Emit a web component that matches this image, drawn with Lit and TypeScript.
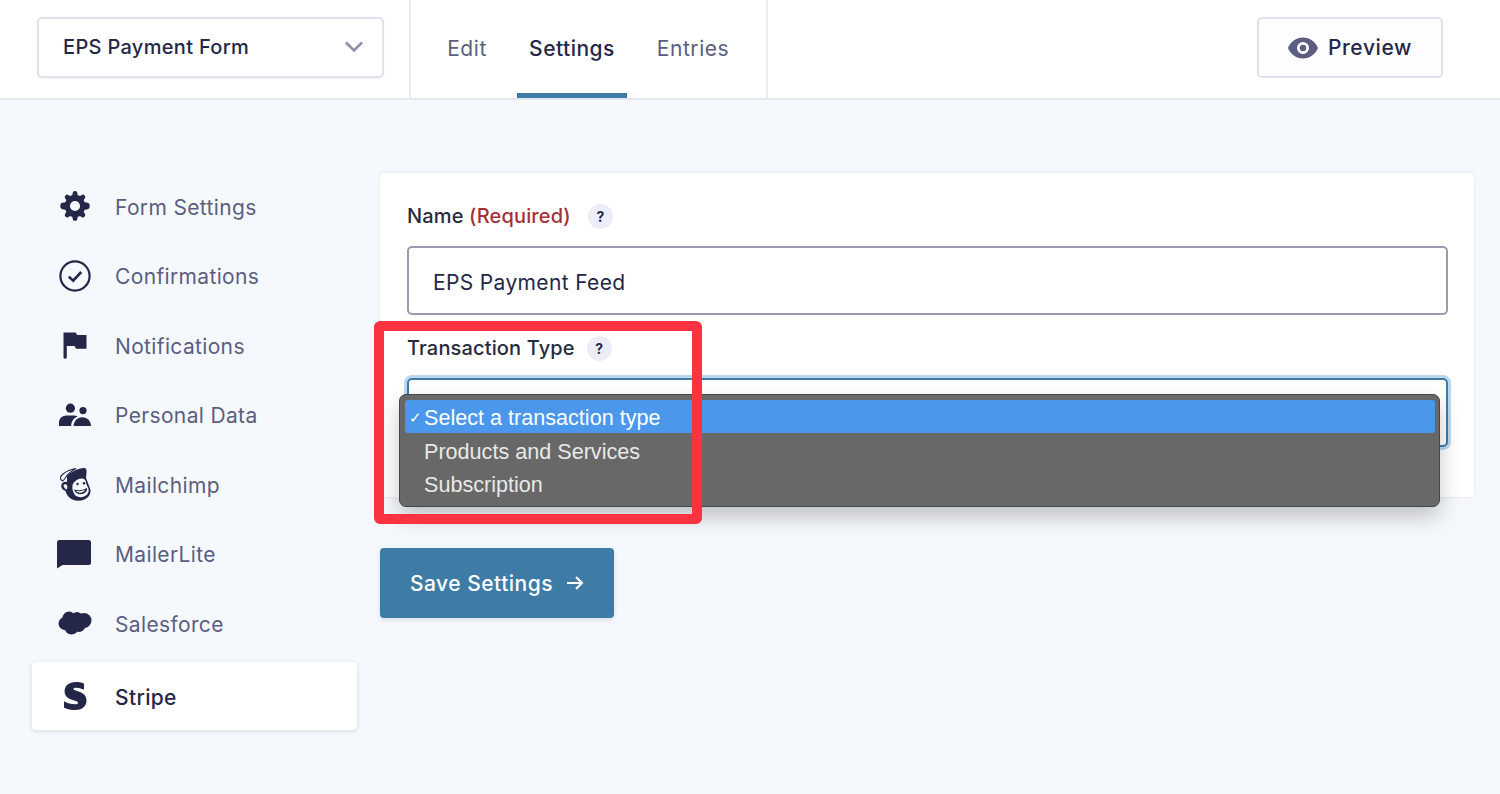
import { LitElement, html, css, svg } from "lit";
import { customElement } from "lit/decorators.js";

const NAVY = "#242748";
const BG = "#f5f8fc";

const icons: Record<string, unknown> = {
  gear: svg`<svg class="ic" width="30" height="30" viewBox="0 0 32 32"><path fill="${NAVY}" fill-rule="evenodd" d="M13.4 2.6a2.6 2.6 0 0 1 5.2 0l.2 1.7 2.6 1.1 1.4-1a2.6 2.6 0 0 1 3.5 3.8l-1.1 1.3 1.1 2.6 1.7.2a2.8 2.8 0 0 1 0 7.4l-1.7.2-1.1 2.6 1.1 1.3a2.6 2.6 0 0 1-3.5 3.8l-1.4-1-2.6 1.1-.2 1.7a2.6 2.6 0 0 1-5.2 0l-.2-1.7-2.6-1.1-1.4 1a2.6 2.6 0 0 1-3.5-3.8l1.1-1.3-1.1-2.6-1.7-.2a2.8 2.8 0 0 1 0-7.4l1.7-.2 1.1-2.6-1.1-1.3a2.6 2.6 0 0 1 3.5-3.8l1.4 1 2.6-1.1zM16 10.6a5.4 5.4 0 1 0 0 10.8 5.4 5.4 0 0 0 0-10.8z"/></svg>`,
  check: svg`<svg class="ic" width="32" height="32" viewBox="0 0 32 32" fill="none" stroke="${NAVY}"><circle cx="16" cy="16" r="14.6" stroke-width="2.2"/><path d="M9.8 16.6l4.4 4 8-8.6" stroke-width="2.6"/></svg>`,
  flag: svg`<svg class="ic" width="32" height="32" viewBox="0 0 32 32"><path fill="${NAVY}" d="M4.5 3.5h12.2l1.4 2.6h9.4v13.6H17l-1.4-2.8H7.8v11.3a1.65 1.65 0 0 1-3.3 0z"/></svg>`,
  people: svg`<svg class="ic" width="32" height="32" viewBox="0 0 32 32"><g fill="${NAVY}"><circle cx="11.4" cy="9.2" r="4.6"/><circle cx="24" cy="11.6" r="3.6"/><path d="M0 27v-3.4c0-4.200 3.400-7.200 7.300-7.200h7.600c1.400 0 2.600.4 3.600 1-3.700 1.600-6.200 4.800-6.400 9.600z"/><path d="M14.600 27c0-4.800 3.600-8.800 8.700-8.800S32 22.200 32 27z"/></g></svg>`,
  chimp: svg`<svg class="ic" width="32" height="34" viewBox="0 0 32 34">
    <path fill="${NAVY}" d="M8 9C12 5 19 1 25 1c2.500 0 2.800 2.500 2.500 5l-.5 5 2 5 2.500 7c.5 4-2 7.500-6 9.500-5 2-11 1.500-14.500-1.500C8 28.500 7 26 6.500 24 3 23 1.500 20 2.500 17.500 3.500 15 6 14.500 8 15z"/>
    <path fill="${BG}" stroke="${NAVY}" stroke-width="1.100" d="M3.500 14C.5 12 1 9.500 4 7c4-3 9-5 13-5.500-3.500 2-8 5-10 8.500-1.500 2-2.200 3.500-3.500 4z"/>
    <path fill="${BG}" d="M4.800 17.800c1.300-1 2.800-.5 3.300.8.500 1.500.3 3-.4 3.800-1.500-.2-3.900-3-2.900-4.600z"/>
    <path fill="${BG}" d="M13.500 18c1.500-3.500 5-6.500 9-6.500 3 0 4.500 2 4.500 4.500l2.500 6c.8 3-1 6-4 7.300-3.500 1.500-7.500 1-9.500-1.300-1.800-2.500-3.200-6-2.500-10z"/>
    <path fill="${NAVY}" d="M15 22.500c3.500 1.300 8.500 1 13-1.500.5 3-1.500 5.300-5 6.100-3.800.7-7-1.300-8-4.600z"/>
    <path fill="${BG}" d="M17 23.800c3 .7 6 .3 9-1-.8 1.800-2.800 2.900-5 3-1.800 0-3.200-.7-4-2z"/>
    <circle cx="18.500" cy="17" r="1.200" fill="${NAVY}"/><circle cx="25" cy="16.300" r="1.200" fill="${NAVY}"/>
  </svg>`,
  bubble: svg`<svg class="ic bub" width="36" height="30" viewBox="0 0 36 30"><path fill="${NAVY}" d="M3.500 1h29A2.500 2.500 0 0 1 35 3.500v20a2.500 2.500 0 0 1-2.500 2.500H6.500L1 29.500V3.500A2.500 2.500 0 0 1 3.500 1z"/></svg>`,
  cloud: svg`<svg class="ic" width="34" height="24" viewBox="0 0 34 24"><g fill="${NAVY}"><circle cx="11" cy="7" r="6.500"/><circle cx="19" cy="6.500" r="5.500"/><circle cx="26" cy="9.500" r="7.500"/><circle cx="7" cy="12.500" r="6.500"/><circle cx="13.500" cy="16.500" r="7"/><circle cx="21" cy="14.500" r="6.500"/></g></svg>`,
  s: svg`<svg class="ic" width="24" height="30" viewBox="0 0 24 30"><path fill="${NAVY}" d="M21 2.400v6.300c-2.600-1.300-5.400-2-8-2-1.600 0-2.500.4-2.500 1.300 0 2.700 13 1.400 13 11.500C23.500 25.700 18.800 29 12 29c-3.700 0-7.600-.8-11-2.300v-6.500c3 1.700 7.200 3 11 3 1.800 0 3-.5 3-1.500C15 18.800 1.600 20.100 1.600 10.300 1.600 4.500 6 1 12.800 1c2.900 0 5.600.4 8.200 1.400z"/></svg>`,
};

const nav = [
  ["Form Settings", "gear"],
  ["Confirmations", "check"],
  ["Notifications", "flag"],
  ["Personal Data", "people"],
  ["Mailchimp", "chimp"],
  ["MailerLite", "bubble"],
  ["Salesforce", "cloud"],
];

@customElement("app-root")
export class AppRoot extends LitElement {
  static styles = css`
    :host { display: block; width: 1500px; height: 794px; overflow: hidden; background: #f5f8fc; font-family: Inter, "Noto Sans", sans-serif; color: #242748; }
    * { box-sizing: border-box; }
    .top { height: 100px; background: #fff; border-bottom: 2px solid #e3e6ef; display: flex; align-items: stretch; }
    .formsel { margin: 17px 25px 0 37px; width: 347px; height: 61px; border: 2px solid #dfe2ec; border-radius: 5px; display: flex; align-items: center; justify-content: space-between; padding: 0 18px 2px 24px; font-size: 20px; font-weight: 500; letter-spacing: .32px; box-shadow: 0 1px 2px rgba(36,39,72,.05); }
    .tabs { display: flex; width: 359px; border-left: 2px solid #eaecf2; border-right: 2px solid #eaecf2; }
    .tab { font-size: 21px; color: #5b5e80; font-weight: 400; letter-spacing: .55px; padding-top: 36px; height: 98px; text-align: center; line-height: 26px; }
    .tab.e { width: 106px; padding-left: 6px; }
    .tab.on { width: 110px; color: #242748; font-weight: 500; letter-spacing: .5px; border-bottom: 5px solid #3e7ca6; }
    .tab.n { width: 130px; padding-left: 2px; }
    .spacer { flex: 1; }
    .preview { margin: 17px 57px 0 0; width: 186px; height: 61px; border: 2px solid #dfe2ec; border-radius: 5px; background: #fdfdff; display: flex; align-items: center; justify-content: center; gap: 10px; font-size: 21px; font-weight: 500; letter-spacing: .6px; }
    .body { display: flex; padding-top: 73px; align-items: flex-start; }
    .side { width: 325px; margin-left: 32px; margin-right: 23px; display: flex; flex-direction: column; }
    .item { height: 69.5px; display: flex; align-items: center; font-size: 21px; letter-spacing: .35px; color: #5b5e80; }
    .item span { padding-top: 2px; }
    .side .first { margin-top: -2px; height: 70px; }
    .icw { width: 83px; display: flex; justify-content: center; padding-left: 2px; flex: none; }
    .ic { display: block; }
    .ic.bub { margin-left: -2px; }
    .item.on { height: 68px; margin-top: 3.5px; background: #fff; border-radius: 4px; color: #242748; font-weight: 500; box-shadow: 0 1px 4px rgba(36,39,72,.16); }
    .item.on span { padding-top: 4px; }
    .main { width: 1094px; }
    .card { height: 324px; background: #fff; border-radius: 3px; box-shadow: 0 0 3px rgba(36,39,72,.12); padding: 30px 26px 0 27px; }
    .label { display: flex; align-items: center; height: 26px; font-size: 20px; font-weight: 450; letter-spacing: .15px; color: #272a3d; }
    .req { color: #a5303a; margin-right: 5px; }
    .q { width: 25px; height: 25px; border-radius: 50%; background: #ecedf9; margin-left: 12px; font-size: 14px; font-weight: 700; display: flex; align-items: center; justify-content: center; color: #242748; }
    .input { margin-top: 17px; height: 69px; border: 2px solid #9a9bb0; border-radius: 5px; padding: 3px 0 0 24px; display: flex; align-items: center; font-size: 21px; font-weight: 400; letter-spacing: .35px; }
    .label.t { margin-top: 20px; }
    .selw { position: relative; margin-top: 17px; height: 69px; }
    .sel { height: 69px; border: 2px solid #3e7ca6; border-radius: 5px; box-shadow: 0 0 0 3px #b9d8f0; background: #fff; }
    .pop { position: absolute; left: -8px; top: 15.5px; width: 1041px; height: 113px; background: #676867; border: 1px solid #45464a; border-radius: 7px; padding: 5px 4px 5px 5px; box-shadow: 0 10px 22px rgba(0,0,0,.22); font-family: "Liberation Sans", Arial, sans-serif; font-size: 21.6px; color: #e8e8e8; z-index: 2; }
    .opt { height: 33.7px; display: flex; align-items: center; padding: 3px 0 0 19px; position: relative; border-radius: 3px; }
    .opt.on { background: #4a97eb; color: #fff; }
    .tick { position: absolute; left: 4px; font-size: 15px; }
    .mark { position: absolute; left: -33px; top: -57.5px; width: 328px; height: 203px; border: 10px solid #fb3341; border-radius: 6px; z-index: 3; }
    .save { margin-top: 51px; width: 234px; height: 70px; background: #3e7ca6; color: #fff; border-radius: 4px; display: flex; align-items: center; justify-content: center; gap: 13px; font-size: 21px; font-weight: 500; letter-spacing: .5px; box-shadow: 0 2px 5px rgba(36,39,72,.12); }
  `;

  render() {
    return html`
      <div class="top">
        <div class="formsel">
          <span>EPS Payment Form</span>
          <svg width="20" height="12" viewBox="0 0 20 12" fill="none" stroke="#8e90a8" stroke-width="2.6"><path d="M2 1.500l8 8 8-8"/></svg>
        </div>
        <div class="tabs">
          <div class="tab e">Edit</div>
          <div class="tab on">Settings</div>
          <div class="tab n">Entries</div>
        </div>
        <div class="spacer"></div>
        <div class="preview">
          <svg width="30" height="22" viewBox="0 0 30 22"><path fill="#5b5e80" fill-rule="evenodd" d="M15 .5C22 .5 27.500 5 30 11c-2.500 6-8 10.500-15 10.500S2.500 17 0 11C2.500 5 8 .5 15 .5zm0 4.500a6 6 0 1 0 0 12 6 6 0 0 0 0-12z"/><circle cx="15" cy="11" r="3.200" fill="#5b5e80"/></svg>
          <span>Preview</span>
        </div>
      </div>
      <div class="body">
        <div class="side">
          ${nav.map(
            ([t, i], n) => html`<div class="item ${n === 0 ? "first" : ""}"><div class="icw">${icons[i]}</div><span>${t}</span></div>`
          )}
          <div class="item on"><div class="icw">${icons.s}</div><span>Stripe</span></div>
        </div>
        <div class="main">
          <div class="card">
            <div class="label">Name&nbsp;<span class="req">(Required)</span><span class="q">?</span></div>
            <div class="input">EPS Payment Feed</div>
            <div class="label t">Transaction Type<span class="q">?</span></div>
            <div class="selw">
              <div class="sel"></div>
              <div class="pop">
                <div class="opt on"><span class="tick">✓</span>Select a transaction type</div>
                <div class="opt">Products and Services</div>
                <div class="opt">Subscription</div>
              </div>
              <div class="mark"></div>
            </div>
          </div>
          <div class="save">
            <span>Save Settings</span>
            <svg width="18" height="16" viewBox="0 0 18 16" fill="none" stroke="#fff" stroke-width="2"><path d="M1 8h15M10 2l6 6-6 6"/></svg>
          </div>
        </div>
      </div>
    `;
  }
}
